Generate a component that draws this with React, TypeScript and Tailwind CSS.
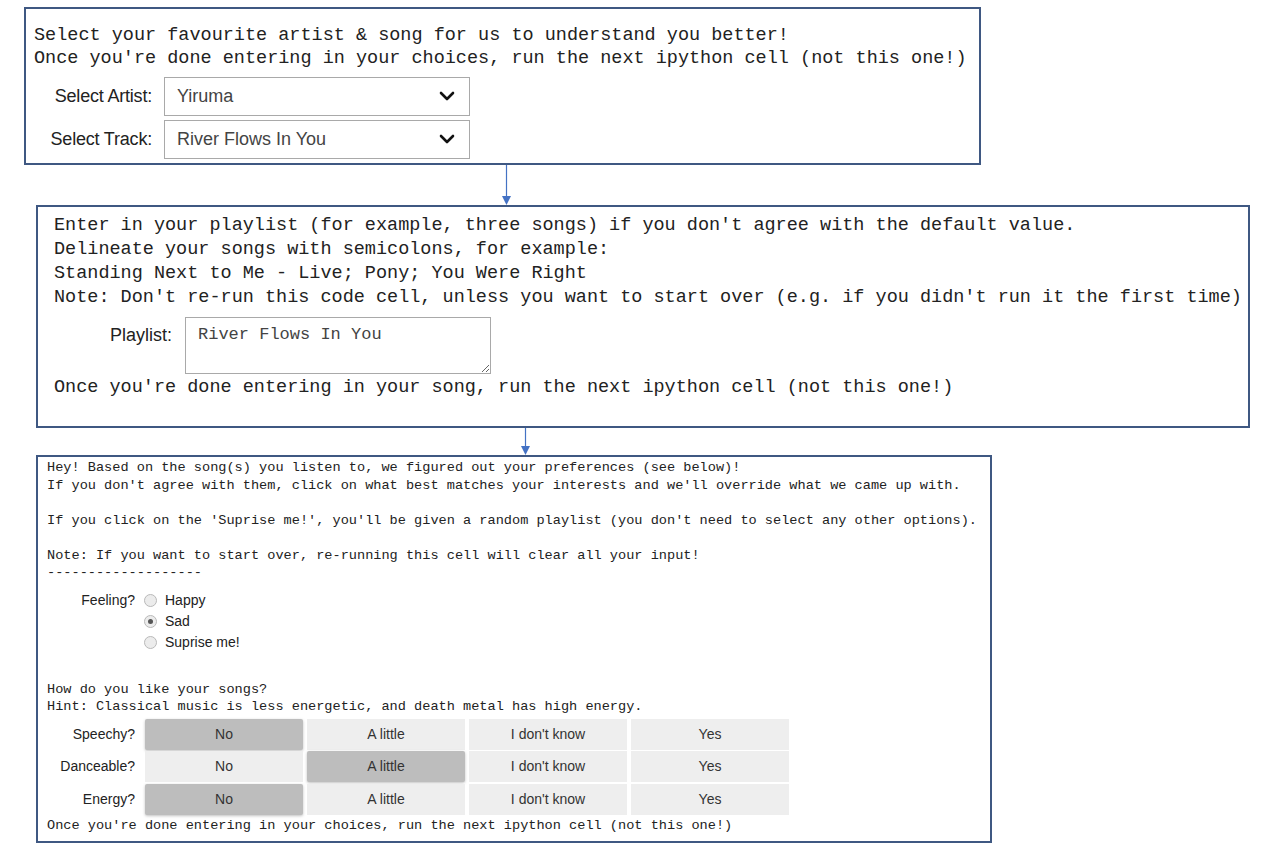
import { useState } from 'react';

const mono = { fontFamily: '"Liberation Mono", "DejaVu Sans Mono", monospace' };
const sans = { fontFamily: '"Liberation Sans", Arial, sans-serif' };

const Chevron = () => (
  <svg width="16" height="11" viewBox="0 0 16 11" className="shrink-0">
    <path d="M2 2 L8 8 L14 2" fill="none" stroke="#111" strokeWidth="2.6" strokeLinecap="round" strokeLinejoin="round" />
  </svg>
);

const Arrow = ({ h }: { h: number }) => (
  <svg width="13" height={h} viewBox={`0 0 13 ${h}`} className="block">
    <line x1="6.5" y1="0" x2="6.5" y2={h - 7} stroke="#4472c4" strokeWidth="1.2" />
    <path d={`M2 ${h - 9} L11 ${h - 9} L6.5 ${h} Z`} fill="#4472c4" />
  </svg>
);

function FakeSelect({ value }: { value: string }) {
  return (
    <div className="flex items-center justify-between w-[306px] h-[39px] border border-[#a9a9a9] bg-white pl-[12px] pr-[14px]">
      <span className="text-[18px] text-[#444]" style={sans}>{value}</span>
      <Chevron />
    </div>
  );
}

function Radio({ checked }: { checked?: boolean }) {
  return (
    <span className="w-[13px] h-[13px] rounded-full border border-[#b9b9b9] bg-[#ececec] flex items-center justify-center shrink-0">
      {checked && <span className="w-[5px] h-[5px] rounded-full bg-[#555]" />}
    </span>
  );
}

const options = ['No', 'A little', "I don't know", 'Yes'];

function ToggleRow({ label, selected, onPick }: { label: string; selected: number; onPick: (i: number) => void }) {
  return (
    <div className="flex items-center h-[31px]">
      <div className="w-[88px] text-right text-[14px] text-[#222]" style={sans}>{label}</div>
      <div className="flex gap-[4px] ml-[10px]">
        {options.map((o, i) => (
          <button
            key={o}
            onClick={() => onPick(i)}
            className={
              'w-[158px] h-[31px] text-[14px] text-[#333] ' +
              (i === selected
                ? 'bg-[#bdbdbd] rounded-[2px] shadow-[0_1px_3px_rgba(0,0,0,0.25)]'
                : 'bg-[#eeeeee]')
            }
            style={sans}
          >
            {o}
          </button>
        ))}
      </div>
    </div>
  );
}

export default function App() {
  const [speechy, setSpeechy] = useState(0);
  const [dance, setDance] = useState(1);
  const [energy, setEnergy] = useState(0);

  return (
    <div className="w-[1268px] h-[856px] overflow-hidden bg-white text-[#222]">
      {/* artist & track */}
      <div className="mt-[7px] ml-[24px] w-[957px] h-[158px] border-2 border-[#3f5882] pl-[8px] pt-[15px]">
        <div className="text-[18.5px] leading-[23px] whitespace-pre" style={mono}>
          <div>Select your favourite artist &amp; song for us to understand you better!</div>
          <div>Once you're done entering in your choices, run the next ipython cell (not this one!)</div>
        </div>
        <div className="mt-[7px] flex flex-col gap-[4px]">
          <div className="flex items-center">
            <div className="w-[118px] text-right text-[18px] text-[#222] tracking-[-0.2px]" style={sans}>Select Artist:</div>
            <div className="ml-[12px]"><FakeSelect value="Yiruma" /></div>
          </div>
          <div className="flex items-center">
            <div className="w-[118px] text-right text-[18px] text-[#222] tracking-[-0.2px]" style={sans}>Select Track:</div>
            <div className="ml-[12px]"><FakeSelect value="River Flows In You" /></div>
          </div>
        </div>
      </div>

      <div className="ml-[500px]"><Arrow h={40} /></div>

      {/* playlist */}
      <div className="ml-[36px] w-[1214px] h-[223px] border-2 border-[#3f5882] pl-[16px] pt-[7px]">
        <div className="text-[18.5px] leading-[24px] whitespace-pre" style={mono}>
          <div>Enter in your playlist (for example, three songs) if you don't agree with the default value.</div>
          <div>Delineate your songs with semicolons, for example:</div>
          <div>Standing Next to Me - Live; Pony; You Were Right</div>
          <div>Note: Don't re-run this code cell, unless you want to start over (e.g. if you didn't run it the first time)</div>
        </div>
        <div className="mt-[7px] flex items-start">
          <div className="w-[118px] pt-[5px] text-right text-[18px] text-[#222]" style={sans}>Playlist:</div>
          <textarea
            readOnly
            defaultValue="River Flows In You"
            className="ml-[13px] w-[306px] h-[57px] border border-[#a9a9a9] px-[12px] pt-[6px] text-[17px] leading-[22px] text-[#444] outline-none"
            style={mono}
          />
        </div>
        <div className="mt-[2px] text-[18.5px] leading-[24px] whitespace-pre" style={mono}>
          Once you're done entering in your song, run the next ipython cell (not this one!)
        </div>
      </div>

      <div className="ml-[519px]"><Arrow h={27} /></div>

      {/* preferences */}
      <div className="ml-[36px] w-[956px] h-[388px] border-2 border-[#3f5882] pl-[9px] pt-[2px]">
        <div className="text-[13.6px] leading-[17.5px] whitespace-pre" style={mono}>
          <div>Hey! Based on the song(s) you listen to, we figured out your preferences (see below)!</div>
          <div>If you don't agree with them, click on what best matches your interests and we'll override what we came up with.</div>
          <div>&nbsp;</div>
          <div>If you click on the 'Suprise me!', you'll be given a random playlist (you don't need to select any other options).</div>
          <div>&nbsp;</div>
          <div>Note: If you want to start over, re-running this cell will clear all your input!</div>
          <div>-------------------</div>
        </div>

        <div className="mt-[8px] flex items-start">
          <div className="w-[88px] h-[21px] flex items-center justify-end text-[14px] text-[#222]" style={sans}>Feeling?</div>
          <div className="ml-[9px] flex flex-col">
            {[['Happy', false], ['Sad', true], ['Suprise me!', false]].map(([l, c]) => (
              <div key={l as string} className="flex items-center h-[21px] gap-[8px]">
                <Radio checked={c as boolean} />
                <span className="text-[14px] text-[#222]" style={sans}>{l as string}</span>
              </div>
            ))}
          </div>
        </div>

        <div className="mt-[28px] text-[13.6px] leading-[17.5px] whitespace-pre" style={mono}>
          <div>How do you like your songs?</div>
          <div>Hint: Classical music is less energetic, and death metal has high energy.</div>
        </div>

        <div className="mt-[3px] flex flex-col gap-[1.5px]">
          <ToggleRow label="Speechy?" selected={speechy} onPick={setSpeechy} />
          <ToggleRow label="Danceable?" selected={dance} onPick={setDance} />
          <ToggleRow label="Energy?" selected={energy} onPick={setEnergy} />
        </div>

        <div className="mt-[2px] text-[13.6px] leading-[17.5px] whitespace-pre" style={mono}>
          Once you're done entering in your choices, run the next ipython cell (not this one!)
        </div>
      </div>
    </div>
  );
}
